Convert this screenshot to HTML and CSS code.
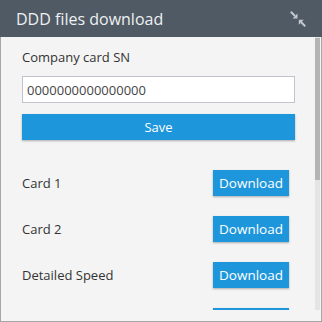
FILE: index.html
```html
<!DOCTYPE html>
<html>
<head>
<meta charset="utf-8">
<link rel="stylesheet" href="styles.css">
</head>
<body>
<div class="panel">
  <div class="header">
    <span class="title">DDD files download</span>
    <svg class="compress" width="16" height="16" viewBox="0 0 16 16">
      <line x1="0.8" y1="0.8" x2="5" y2="5" stroke="#c3c8ce" stroke-width="2"/>
      <polygon points="7.5,7.5 7.5,2.5 2.5,7.5" fill="#c3c8ce"/>
      <polygon points="8.8,8.8 13.8,8.8 8.8,13.8" fill="#c3c8ce"/>
      <line x1="11" y1="11" x2="15.2" y2="15.2" stroke="#c3c8ce" stroke-width="2"/>
    </svg>
  </div>
  <div class="body">
    <div class="scroll">
      <div class="content">
        <div class="label">Company card SN</div>
        <input class="field" type="text" value="0000000000000000">
        <button class="save">Save</button>
        <div class="rows">
          <div class="row"><span class="row-label">Card 1</span><button class="dl">Download</button></div>
          <div class="row"><span class="row-label">Card 2</span><button class="dl">Download</button></div>
          <div class="row"><span class="row-label">Detailed Speed</span><button class="dl">Download</button></div>
          <div class="row"><span class="row-label"></span><button class="dl" aria-label="Download"></button></div>
        </div>
      </div>
    </div>
    <div class="scrollbar"><div class="thumb"></div></div>
  </div>
</div>
</body>
</html>
```

FILE: styles.css
```css
* { box-sizing: border-box; }
html, body { margin: 0; padding: 0; }
body {
  font-family: "Open Sans", "DejaVu Sans", sans-serif;
  background: #f4f4f4;
}
.panel {
  width: 322px;
  height: 322px;
  display: flex;
  flex-direction: column;
  background: #f4f4f4;
}
.header {
  height: 37px;
  flex: none;
  background: #4f5a64;
  display: flex;
  align-items: center;
  justify-content: space-between;
  padding: 0 16px 0 16px;
}
.title {
  color: #eef0f2;
  font-size: 16px;
  line-height: 20px;
}
.compress {
  display: block;
}
.body {
  flex: 1;
  min-height: 0;
  border: 1px solid #a6a6a6;
  border-top: none;
  padding: 0 1px 11px 0;
  display: flex;
}
.scroll {
  flex: 1;
  min-width: 0;
  overflow: hidden;
}
.scrollbar {
  width: 5px;
  flex: none;
  background: #e4e4e4;
  padding-top: 1px;
}
.thumb {
  height: 142px;
  background: #b4b4b4;
}
.content {
  padding: 11px 20px 0 21px;
  display: flex;
  flex-direction: column;
}
.label {
  font-size: 13px;
  line-height: 18px;
  color: #333;
}
.field {
  margin-top: 10px;
  height: 27px;
  width: 100%;
  border: 1px solid #c2c2cc;
  background: #fff;
  font-family: "Open Sans", "DejaVu Sans", sans-serif;
  font-size: 13px;
  color: #444;
  padding: 0 4px;
  outline: none;
}
.save {
  margin-top: 11px;
  height: 26px;
  width: 100%;
  border: none;
  background: #1e96dc;
  color: #fff;
  font-family: "Open Sans", "DejaVu Sans", sans-serif;
  font-size: 13px;
  box-shadow: 0 1px 2px rgba(0,0,0,0.3);
  padding: 0;
}
.rows {
  margin-top: 30px;
  display: flex;
  flex-direction: column;
  gap: 20px;
  padding-right: 6px;
}
.row {
  display: flex;
  align-items: center;
  justify-content: space-between;
  height: 26px;
  flex: none;
}
.row-label {
  font-size: 13px;
  color: #333;
}
.dl {
  width: 76px;
  height: 26px;
  border: none;
  background: #1e96dc;
  color: #fff;
  font-family: "Open Sans", "DejaVu Sans", sans-serif;
  font-size: 13.5px;
  padding: 0;
  box-shadow: 0 1px 2px rgba(0,0,0,0.3);
}
```
